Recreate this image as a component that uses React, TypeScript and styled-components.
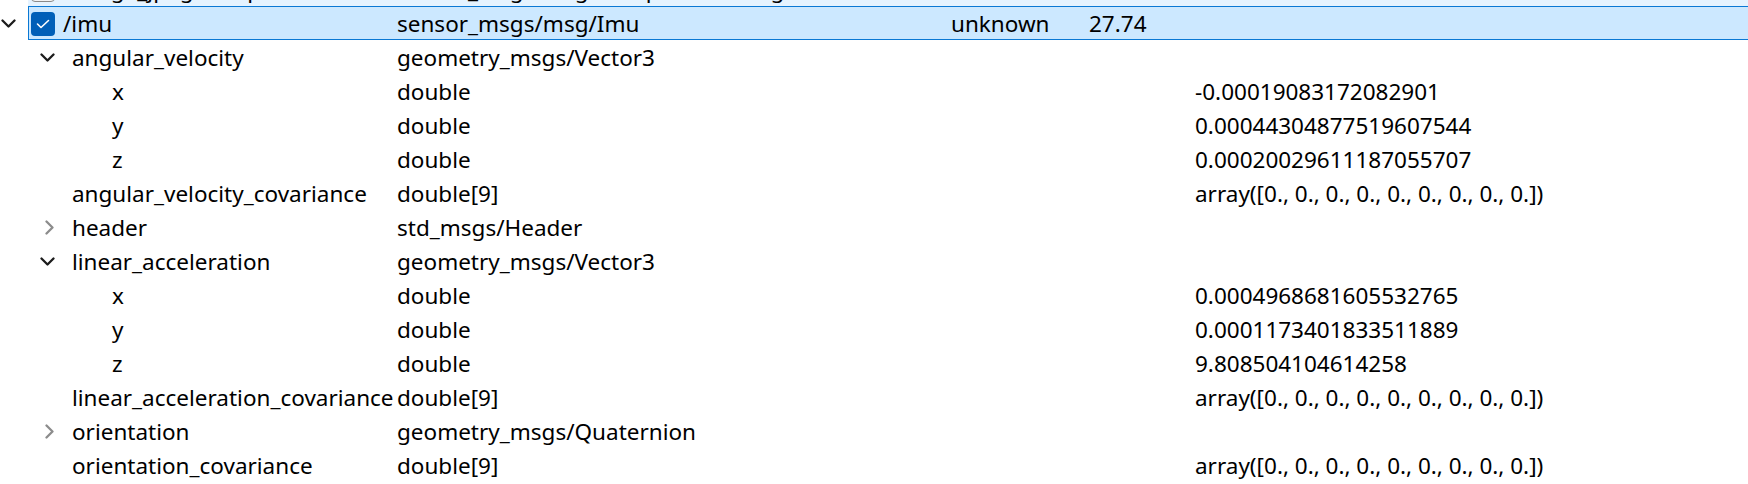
import React from "react";
import styled, { createGlobalStyle, css } from "styled-components";

const GlobalStyle = createGlobalStyle`
  html, body { margin: 0; padding: 0; background: #ffffff; overflow: hidden; }
  body { font-family: "Noto Sans", "Open Sans", sans-serif; color: #000; }
`;

type RowState = "normal" | "hover" | "selected";

type TreeNode = {
  name: string;
  type: string;
  bw?: string;
  hz?: string;
  value?: string;
  checked?: boolean;
  state?: RowState;
  expanded?: boolean;
  children?: TreeNode[];
};

const arr = "array([0., 0., 0., 0., 0., 0., 0., 0., 0.])";

const vec = (vals: string[]): TreeNode[] =>
  ["x", "y", "z"].map((n, i) => ({ name: n, type: "double", value: vals[i] }));

const data: TreeNode[] = [
  {
    name: "/image_jpeg/compressed",
    type: "sensor_msgs/msg/CompressedImage",
    bw: "unknown",
    hz: "30.00",
    checked: false,
    state: "hover",
    children: [],
  },
  {
    name: "/imu",
    type: "sensor_msgs/msg/Imu",
    bw: "unknown",
    hz: "27.74",
    checked: true,
    state: "selected",
    expanded: true,
    children: [
      {
        name: "angular_velocity",
        type: "geometry_msgs/Vector3",
        expanded: true,
        children: vec([
          "-0.00019083172082901",
          "0.00044304877519607544",
          "0.00020029611187055707",
        ]),
      },
      { name: "angular_velocity_covariance", type: "double[9]", value: arr },
      { name: "header", type: "std_msgs/Header", expanded: false, children: [{ name: "stamp", type: "" }] },
      {
        name: "linear_acceleration",
        type: "geometry_msgs/Vector3",
        expanded: true,
        children: vec([
          "0.0004968681605532765",
          "0.0001173401833511889",
          "9.808504104614258",
        ]),
      },
      { name: "linear_acceleration_covariance", type: "double[9]", value: arr },
      { name: "orientation", type: "geometry_msgs/Quaternion", expanded: false, children: [{ name: "x", type: "" }] },
      { name: "orientation_covariance", type: "double[9]", value: arr },
    ],
  },
];

type FlatRow = { node: TreeNode; depth: number; key: string };

const flatten = (nodes: TreeNode[], depth = 0, prefix = ""): FlatRow[] =>
  nodes.flatMap((n, i) => {
    const key = `${prefix}${i}`;
    const self: FlatRow = { node: n, depth, key };
    const kids = n.expanded && n.children ? flatten(n.children, depth + 1, key + ".") : [];
    return [self, ...kids];
  });

const ROW_H = 34;
const INDENT = 40;
const BRANCH_W = 28;
const COL_TYPE_X = 397;

const Viewport = styled.div`
  width: 1748px;
  height: 484px;
  overflow: hidden;
`;

const List = styled.div`
  display: flex;
  flex-direction: column;
  margin-top: -28px;
`;

const Row = styled.div`
  display: flex;
  height: ${ROW_H}px;
  font-size: 22.5px;
  line-height: 32px;
  white-space: nowrap;
`;

const Branch = styled.div<{ $depth: number }>`
  flex: none;
  box-sizing: border-box;
  width: ${(p) => BRANCH_W + p.$depth * INDENT}px;
  padding-left: ${(p) => 1 + p.$depth * 39}px;
  display: flex;
  align-items: center;
`;

const Item = styled.div<{ $state: RowState }>`
  flex: 1;
  display: flex;
  align-items: center;
  border: 1px solid transparent;
  border-right: none;
  min-width: 0;
  ${(p) =>
    p.$state === "selected" &&
    css`
      background: #cce8ff;
      border-color: #0a78d4;
    `}
  ${(p) =>
    p.$state === "hover" &&
    css`
      background: #e5f3ff;
    `}
`;

const NameCell = styled.div<{ $depth: number }>`
  flex: none;
  box-sizing: border-box;
  width: ${(p) => COL_TYPE_X - BRANCH_W - 1 - p.$depth * INDENT}px;
  padding-left: 3px;
  display: flex;
  align-items: center;
  padding-top: 1px;
`;

const Cell = styled.div<{ $w?: number }>`
  flex: ${(p) => (p.$w ? "none" : "1")};
  width: ${(p) => (p.$w ? `${p.$w}px` : "auto")};
  padding-top: 1px;
`;

const Checkbox = styled.span<{ $checked: boolean }>`
  flex: none;
  width: 24px;
  height: 24px;
  margin: 0 8px 0 -1px;
  box-sizing: border-box;
  border-radius: 4px;
  display: inline-flex;
  align-items: center;
  justify-content: center;
  ${(p) =>
    p.$checked
      ? css`
          background: #005fb8;
        `
      : css`
          background: #f3f3f3;
          border: 1px solid #8a8a8a;
        `}
`;

const ChevronDown = () => (
  <svg width="15" height="9" viewBox="0 0 15 9">
    <polyline points="1.5,1.5 7.5,7.5 13.5,1.5" fill="none" stroke="#1c1c1c" strokeWidth="2.3" strokeLinecap="round" strokeLinejoin="round" />
  </svg>
);

const ChevronRight = () => (
  <svg width="15" height="15" viewBox="0 0 15 15" style={{ marginLeft: 3 }}>
    <polyline points="3.5,1.5 9.5,7.5 3.5,13.5" fill="none" stroke="#8c8c8c" strokeWidth="2.3" strokeLinecap="round" strokeLinejoin="round" />
  </svg>
);

const Check = () => (
  <svg width="14" height="10" viewBox="0 0 14 10">
    <polyline points="1.5,5 5,8.5 12.5,1.5" fill="none" stroke="#ffffff" strokeWidth="1.6" strokeLinecap="round" strokeLinejoin="round" />
  </svg>
);

const TreeRow: React.FC<{ row: FlatRow }> = ({ row }) => {
  const { node, depth } = row;
  const hasKids = !!node.children;
  return (
    <Row>
      <Branch $depth={depth}>
        {hasKids && (node.expanded ? <ChevronDown /> : <ChevronRight />)}
      </Branch>
      <Item $state={node.state ?? "normal"}>
        <NameCell $depth={depth}>
          {node.checked !== undefined && (
            <Checkbox $checked={node.checked}>{node.checked && <Check />}</Checkbox>
          )}
          <span>{node.name}</span>
        </NameCell>
        <Cell $w={554}>{node.type}</Cell>
        <Cell $w={138}>{node.bw ?? ""}</Cell>
        <Cell $w={106}>{node.hz ?? ""}</Cell>
        <Cell>{node.value ?? ""}</Cell>
      </Item>
    </Row>
  );
};

export default function App() {
  const rows = flatten(data);
  return (
    <>
      <GlobalStyle />
      <Viewport>
        <List>
          {rows.map((r) => (
            <TreeRow key={r.key} row={r} />
          ))}
        </List>
      </Viewport>
    </>
  );
}
